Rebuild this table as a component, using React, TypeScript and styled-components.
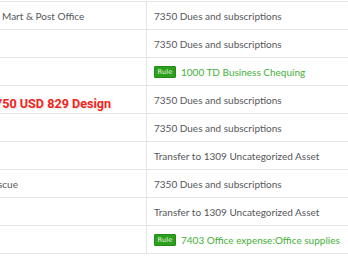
import styled, { createGlobalStyle } from "styled-components";

const GlobalStyle = createGlobalStyle`
  html, body {
    margin: 0;
    padding: 0;
    background: #ffffff;
  }
  body {
    font-family: Lato, "Open Sans", sans-serif;
    overflow: hidden;
  }
`;

const Page = styled.div`
  position: relative;
  width: 348px;
  height: 268px;
  overflow: hidden;
  padding-top: 1px;
  box-sizing: border-box;
`;

const Table = styled.div`
  border-top: 1px solid #e3e4e6;
`;

const Row = styled.div`
  display: grid;
  grid-template-columns: 146px 1fr;
  height: 28px;
  border-bottom: 1px solid #e3e4e6;
  box-sizing: border-box;
`;

const Cell = styled.div<{ $first?: boolean }>`
  display: flex;
  align-items: center;
  gap: 5px;
  overflow: hidden;
  white-space: nowrap;
  font-size: 10px;
  color: #55565a;
  padding-left: ${(p) => (p.$first ? "2px" : "7px")};
  border-left: ${(p) => (p.$first ? "none" : "1px solid #e3e4e6")};
`;

const Clipped = styled.span<{ $shift: number }>`
  margin-left: ${(p) => p.$shift}px;
`;

const RuleBadge = styled.span`
  display: inline-flex;
  align-items: center;
  justify-content: center;
  width: 22px;
  height: 12px;
  box-sizing: border-box;
  background: #2ca01c;
  border: 1px solid #238a15;
  border-radius: 1px;
  color: #e8f6e4;
  font-family: "DejaVu Sans", sans-serif;
  font-size: 6.5px;
  letter-spacing: 0.2px;
`;

const Matched = styled.span`
  color: #44b038;
`;

const Annotation = styled.div`
  position: absolute;
  left: -5px;
  top: 96px;
  font-family: Roboto, "Liberation Sans", sans-serif;
  font-weight: bold;
  font-size: 12.6px;
  color: #f2231b;
  white-space: nowrap;
  text-shadow: 0 0 2px #fff, 0 0 2px #fff, 1px 1px 1px rgba(0, 0, 0, 0.15);
`;

type Line = {
  payee?: string;
  shift?: number;
  account: string;
  rule?: boolean;
};

const lines: Line[] = [
  { payee: "Mart & Post Office", account: "7350 Dues and subscriptions" },
  { account: "7350 Dues and subscriptions" },
  { account: "1000 TD Business Chequing", rule: true },
  { account: "7350 Dues and subscriptions" },
  { account: "7350 Dues and subscriptions" },
  { account: "Transfer to 1309 Uncategorized Asset" },
  { payee: "scue", shift: -4, account: "7350 Dues and subscriptions" },
  { account: "Transfer to 1309 Uncategorized Asset" },
  { account: "7403 Office expense:Office supplies", rule: true },
];

export default function App() {
  return (
    <Page>
      <GlobalStyle />
      <Table>
        {lines.map((line, i) => (
          <Row key={i}>
            <Cell $first>
              {line.payee && <Clipped $shift={line.shift ?? 0}>{line.payee}</Clipped>}
            </Cell>
            <Cell>
              {line.rule ? (
                <>
                  <RuleBadge>Rule</RuleBadge>
                  <Matched>{line.account}</Matched>
                </>
              ) : (
                line.account
              )}
            </Cell>
          </Row>
        ))}
      </Table>
      <Annotation>750 USD 829 Design</Annotation>
    </Page>
  );
}
